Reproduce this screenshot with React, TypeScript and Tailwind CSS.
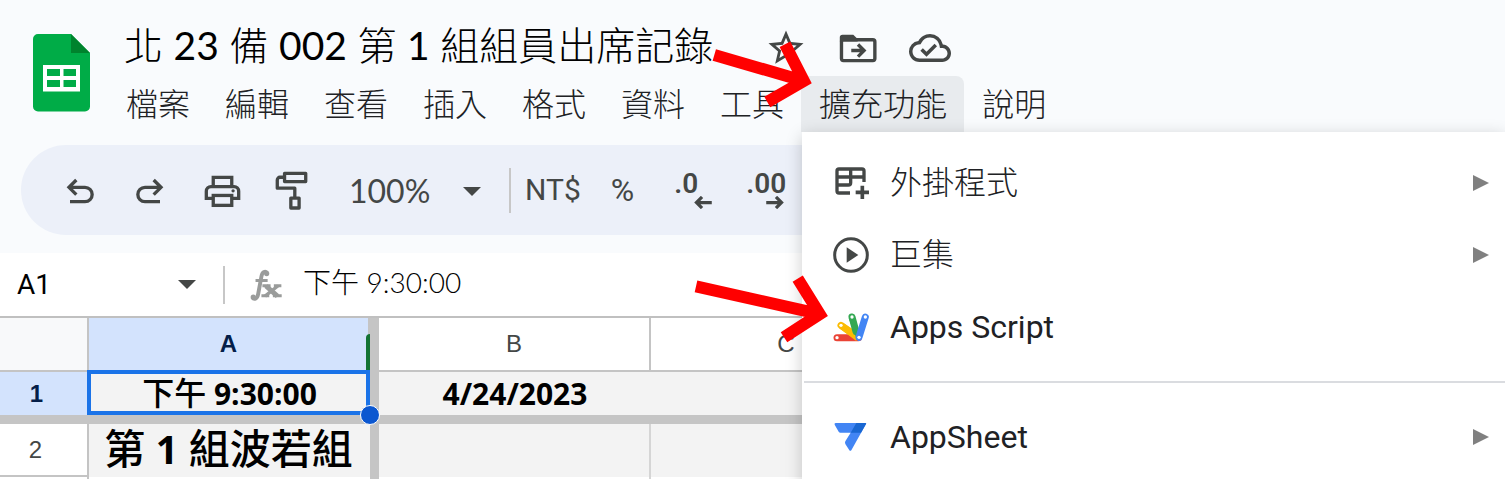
import React from "react";
import { MdStarBorder, MdOutlineCloudDone } from "react-icons/md";

const menus = ["檔案", "編輯", "查看", "插入", "格式", "資料", "工具", "擴充功能", "說明"];
const uiFont = "font-['Lato','Noto_Sans_CJK_TC',sans-serif]";

function SheetsLogo() {
  return (
    <svg viewBox="0 0 57 78" className="h-[78px] w-[57px]" aria-hidden="true">
      <path d="M5 0H38L57 19V72.500a5 5 0 0 1-5 5H5a5 5 0 0 1-5-5V5a5 5 0 0 1 5-5Z" fill="#00ac47" />
      <path d="M38 0 57 19H38Z" fill="#00832d" />
      <path d="M10 31H47V57.500H10ZM14 35V42H27V35ZM30.500 35V42H43V35ZM14 46V53H27V46ZM30.500 46V53H43V46Z" fill="#fff" fillRule="evenodd" />
    </svg>
  );
}

function FolderMove() {
  return (
    <svg viewBox="0 0 112 86" className="h-[29px] w-[38px]" fill="none" stroke="#444746" aria-hidden="true">
      <rect x="7" y="17" width="99" height="62" rx="6" strokeWidth="10" />
      <path d="M2 24V10q0-8 8-8H42L55 15V22H2Z" fill="#444746" stroke="none" />
      <path d="M36 49H70M56 31 74 49 56 67" strokeWidth="10" />
    </svg>
  );
}

function Undo({ flip = false }: { flip?: boolean }) {
  return (
    <svg viewBox="0 0 96 96" className={flip ? "size-8 -scale-x-100" : "size-8"} fill="none" stroke="#444746" strokeWidth="10" aria-hidden="true">
      <path d="M37 18 15 40 37 62M15 40H63a21.500 21.500 0 0 1 0 43H18" />
    </svg>
  );
}

function Printer() {
  return (
    <svg viewBox="0 0 112 112" className="size-[37px]" fill="none" stroke="#444746" strokeWidth="10" aria-hidden="true">
      <path d="M28 44V16H84V44M28 80H7V58a14 14 0 0 1 14-14H91a14 14 0 0 1 14 14V80H84" />
      <rect x="28" y="71" width="56" height="30" />
      <circle cx="88" cy="57" r="5" fill="#444746" stroke="none" />
    </svg>
  );
}

function Roller() {
  return (
    <svg viewBox="0 0 104 124" className="h-[41px] w-[35px]" fill="none" stroke="#444746" strokeWidth="10" strokeLinejoin="round" aria-hidden="true">
      <rect x="31" y="10" width="64" height="25" />
      <path d="M31 22H17a8 8 0 0 0-8 8V55H62V84" />
      <rect x="50" y="85" width="25" height="30" />
    </svg>
  );
}

function Caret() {
  return (
    <svg viewBox="0 0 18 9" className="h-[9px] w-[18px]" fill="#444746" aria-hidden="true">
      <path d="M0 0H18L9 9Z" />
    </svg>
  );
}

function SmallArrow({ right = false }: { right?: boolean }) {
  return (
    <svg viewBox="0 0 54 40" className={right ? "h-[13px] w-[18px] -scale-x-100 self-end" : "h-[13px] w-[18px] self-end"} fill="none" stroke="#444746" strokeWidth="10" aria-hidden="true">
      <path d="M54 20H8M24 3 7 20 24 37" />
    </svg>
  );
}

function Fx() {
  return (
    <svg viewBox="0 0 104 104" className="size-[34px]" fill="none" stroke="#9a9c9b" strokeWidth="10" aria-hidden="true">
      <path d="M56 15C50 9 41 10 38 26L28 80C25 96 15 97 10 90" strokeWidth="12" />
      <circle cx="54" cy="17" r="8" fill="#9a9c9b" stroke="none" />
      <circle cx="13" cy="89" r="8" fill="#9a9c9b" stroke="none" />
      <path d="M20 38H57M41 54H66M76 54H99M38 85H62M73 85H100" strokeWidth="9" />
      <path d="M52 55 87 86" strokeWidth="15" />
      <path d="M89 54 49 86" />
    </svg>
  );
}

function AddonIcon() {
  return (
    <svg viewBox="0 0 108 108" className="size-9" fill="none" stroke="#444746" strokeWidth="10" aria-hidden="true">
      <path d="M51 84H18a6 6 0 0 1-6-6V18a6 6 0 0 1 6-6H87a6 6 0 0 1 6 6V51M12 36H93M53 12V53a7 7 0 0 1-7 7H12" />
      <path d="M88 62V102M68 82H108" strokeWidth="11" />
    </svg>
  );
}

function MacroIcon() {
  return (
    <svg viewBox="0 0 108 108" className="size-9" aria-hidden="true">
      <circle cx="54" cy="54" r="49" fill="none" stroke="#444746" strokeWidth="9" />
      <path d="M41 31 76 54 41 77Z" fill="#444746" />
    </svg>
  );
}

function ScriptIcon() {
  return (
    <svg viewBox="0 0 108 108" className="size-9" strokeWidth="21" strokeLinecap="round" aria-hidden="true">
      <path d="M12 86H76" stroke="#ea4335" />
      <path d="M24 49 66 78" stroke="#fbbc04" />
      <path d="M18 57 70 96 72 72 30 41Z" fill="#fbbc04" stroke="none" />
      <path d="M57 24 69 68" stroke="#34a853" />
      <path d="M47 27 72 92 80 66Z" fill="#34a853" stroke="none" />
      <path d="M97 24 78 85" stroke="#4285f4" />
      <g fill="#fff" stroke="none">
        <circle cx="12" cy="86" r="5" />
        <circle cx="24" cy="49" r="5" />
        <circle cx="57" cy="24" r="5" />
        <circle cx="97" cy="24" r="5" />
        <circle cx="78" cy="85" r="5" />
      </g>
    </svg>
  );
}

function AppSheetIcon() {
  return (
    <svg viewBox="0 0 108 108" className="size-9" aria-hidden="true">
      <path d="M8 12H98Q101 12 99 15L55 94Q52 97 49 94L37 75Q35 71 37 67L53 41H22Q19 41 17 38L5 17Q3 12 8 12Z" fill="#4285f4" />
      <path d="M70 12H97Q101 12 99 15L84 41H53Z" fill="#1967d2" />
    </svg>
  );
}

function MenuRow({ icon, label, more = false }: { icon: React.ReactNode; label: string; more?: boolean }) {
  return (
    <button role="menuitem" className="flex h-[72px] w-full items-center gap-[21px] pr-4 pl-[31px] text-left font-['Roboto','Noto_Sans_CJK_TC',sans-serif] text-[32px] leading-10 text-[#202124]">
      {icon}
      <span className={more && label !== "AppSheet" ? "grow font-light" : "grow"}>{label}</span>
      {more && (
        <svg viewBox="0 0 16 16" className="size-4" fill="#808080" aria-hidden="true">
          <path d="M0 0 16 8 0 16Z" />
        </svg>
      )}
    </button>
  );
}

export default function App() {
  const head = "border-r-2 border-b-2 border-[#c4c4c4] p-0 text-center text-2xl font-normal";
  return (
    <div className={`relative h-screen overflow-hidden bg-[#f9fbfd] text-black ${uiFont}`}>
      <header className="flex pt-5">
        <div className="shrink-0 pt-[14px] pl-[33px]">
          <SheetsLogo />
        </div>
        <div className="pl-[18px]">
          <div className="flex h-14 items-center pl-4">
            <h1 className="w-[640px] pb-[6px] text-[39px] leading-[50px] font-light whitespace-nowrap">
              北 <span className="font-normal">23</span> 備 <span className="font-normal">002</span> 第 <span className="font-normal">1</span> 組組員出席記錄
            </h1>
            <div className="flex items-center gap-8 pl-px text-[#444746]">
              <button aria-label="加上星號"><MdStarBorder className="size-[42px]" /></button>
              <button aria-label="移動"><FolderMove /></button>
              <button aria-label="雲端狀態"><MdOutlineCloudDone className="size-[42px]" /></button>
            </div>
          </div>
          <nav className="flex">
            {menus.map((m) => (
              <button
                key={m}
                className={`h-14 pr-[17px] pl-[18px] text-[32px] leading-10 font-light whitespace-nowrap text-[#202124] ${m === "擴充功能" ? "rounded-t-lg bg-[#e8ebee]" : ""}`}
              >
                {m}
              </button>
            ))}
          </nav>
        </div>
      </header>

      <div role="toolbar" className="mt-[13px] ml-[21px] flex h-[90px] items-center rounded-l-full bg-[#ecf0f9] pl-[43px] whitespace-nowrap text-[#444746]">
        <button aria-label="復原" className="mr-[38px]"><Undo /></button>
        <button aria-label="重做" className="mr-[38px]"><Undo flip /></button>
        <button aria-label="列印" className="mr-[33px]"><Printer /></button>
        <button aria-label="複製格式" className="mr-10"><Roller /></button>
        <button className="flex w-[132px] items-center justify-between pt-[2px] text-[32px] leading-10">
          100% <Caret />
        </button>
        <div className="mr-[14px] ml-7 h-[45px] w-[2px] bg-[#c7c7c7]" />
        <button className="mr-[30px] font-['Roboto',sans-serif] text-[30px] leading-10">NT$</button>
        <button className="mr-10 font-['Roboto',sans-serif] text-[32px] leading-10">%</button>
        <button aria-label="減少小數位數" className="mr-[34px] flex w-[38px] flex-col pt-px font-['Roboto',sans-serif] text-[28px] leading-6 font-semibold">
          <span className="text-left">.0</span>
          <SmallArrow />
        </button>
        <button aria-label="增加小數位數" className="flex w-[38px] flex-col pt-px font-['Roboto',sans-serif] text-[28px] leading-6 font-semibold">
          <span className="text-left">.00</span>
          <SmallArrow right />
        </button>
      </div>

      <div className="mt-[18px] flex h-[63px] items-center bg-white pl-[17px]">
        <input aria-label="名稱方塊" defaultValue="A1" className="w-[161px] font-['Roboto',sans-serif] text-[28px] leading-10 outline-none" />
        <button aria-label="選取範圍"><Caret /></button>
        <div className="mr-6 ml-[27px] h-[38px] w-[2px] bg-[#c7c7c7]" />
        <Fx />
        <div className="ml-5 min-w-0 grow pb-[6px]">
          <input aria-label="公式列" defaultValue="下午 9:30:00" className="w-full text-[28px] leading-10 font-light outline-none" />
        </div>
      </div>

      <table className="w-full table-fixed border-separate border-spacing-0 border-t-2 border-[#c0c0c0] bg-white font-['Liberation_Sans',sans-serif] text-[#444746]">
        <colgroup>
          <col className="w-[89px]" />
          <col className="w-[281px]" />
          <col className="w-[9px]" />
          <col className="w-[272px]" />
          <col className="w-[272px]" />
          <col />
        </colgroup>
        <thead>
          <tr className="h-[54px]">
            <th className={`${head} bg-[#f8f9fa]`} />
            <th className={`${head} relative bg-[#d3e3fd]`}>
              <span className="font-bold text-[#041e49]">A</span>
              <div className="absolute -right-[2px] bottom-0 h-9 w-1 rounded-tl bg-[#137333]" />
            </th>
            <th className="bg-[#c5c5c5] p-0" />
            <th className={head}>B</th>
            <th className={head}>C</th>
            <th className={head}>D</th>
          </tr>
        </thead>
        <tbody>
          <tr className="h-[43px] bg-[#f3f3f3]">
            <th className="bg-[#d3e3fd] p-0 pr-4 text-2xl leading-8 font-bold text-[#041e49]">1</th>
            <td className="relative p-0 text-center font-['Open_Sans','Noto_Sans_CJK_TC',sans-serif] text-[30px] leading-10 font-bold text-black">
              <span className="text-[32px] font-medium">下午</span> 9:30:00
              <div className="absolute -top-[2px] right-0 bottom-0 -left-[2px] border-4 border-[#1a73e8]" />
              <div className="absolute -right-[10px] -bottom-[10px] z-10 size-5 rounded-full border border-white bg-[#0b57d0]" />
            </td>
            <td className="bg-[#c5c5c5] p-0" />
            <td className="p-0 text-center font-['Open_Sans',sans-serif] text-[30px] leading-10 font-bold text-black">4/24/2023</td>
            <td className="p-0" />
            <td className="p-0" />
          </tr>
          <tr className="h-[9px]">
            <td colSpan={6} className="bg-[#c5c5c5] p-0" />
          </tr>
          <tr className="h-[52px] bg-[#f3f3f3]">
            <th className="border-r-2 border-b-2 border-[#c4c4c4] bg-white p-0 pr-4 text-2xl font-normal">2</th>
            <td className="p-0 pr-[2px] pb-1 text-center font-['Open_Sans','Noto_Sans_CJK_TC',sans-serif] text-[41px] leading-[48px] font-medium whitespace-nowrap text-black">
              第 <span className="text-[39px] font-bold">1</span> 組波若組
            </td>
            <td className="bg-[#c5c5c5] p-0" />
            <td className="border-r-2 border-[#d5d5d5] p-0" />
            <td className="border-r-2 border-[#d5d5d5] p-0" />
            <td className="p-0" />
          </tr>
          <tr className="h-[52px]">
            <th className="border-r-2 border-[#c4c4c4] p-0" />
            <td className="p-0" />
            <td className="bg-[#c5c5c5] p-0" />
            <td className="border-r-2 border-[#d5d5d5] p-0" />
            <td className="border-r-2 border-[#d5d5d5] p-0" />
            <td className="p-0" />
          </tr>
        </tbody>
      </table>

      <div role="menu" className="absolute top-[132px] right-0 -bottom-4 left-[802px] z-20 bg-white pt-[15px] shadow-[0_4px_16px_rgba(0,0,0,0.2)]">
        <MenuRow icon={<AddonIcon />} label="外掛程式" more />
        <MenuRow icon={<MacroIcon />} label="巨集" more />
        <MenuRow icon={<ScriptIcon />} label="Apps Script" />
        <div role="separator" className="my-[18px] ml-[2px] h-[2px] bg-[#dadce0]" />
        <MenuRow icon={<AppSheetIcon />} label="AppSheet" more />
      </div>

      <svg viewBox="0 0 1505 479" className="pointer-events-none absolute top-0 left-0 z-30 h-[479px] w-[1505px]" fill="none" stroke="#ff0000" strokeWidth="12" aria-hidden="true">
        <path d="M714.300 55 803.800 81M785 44.300 803.800 81 767.300 102" />
        <path d="M696 286.300 819.700 314.100M797.700 278.700 819.700 314.100 784 337.300" />
      </svg>
    </div>
  );
}
